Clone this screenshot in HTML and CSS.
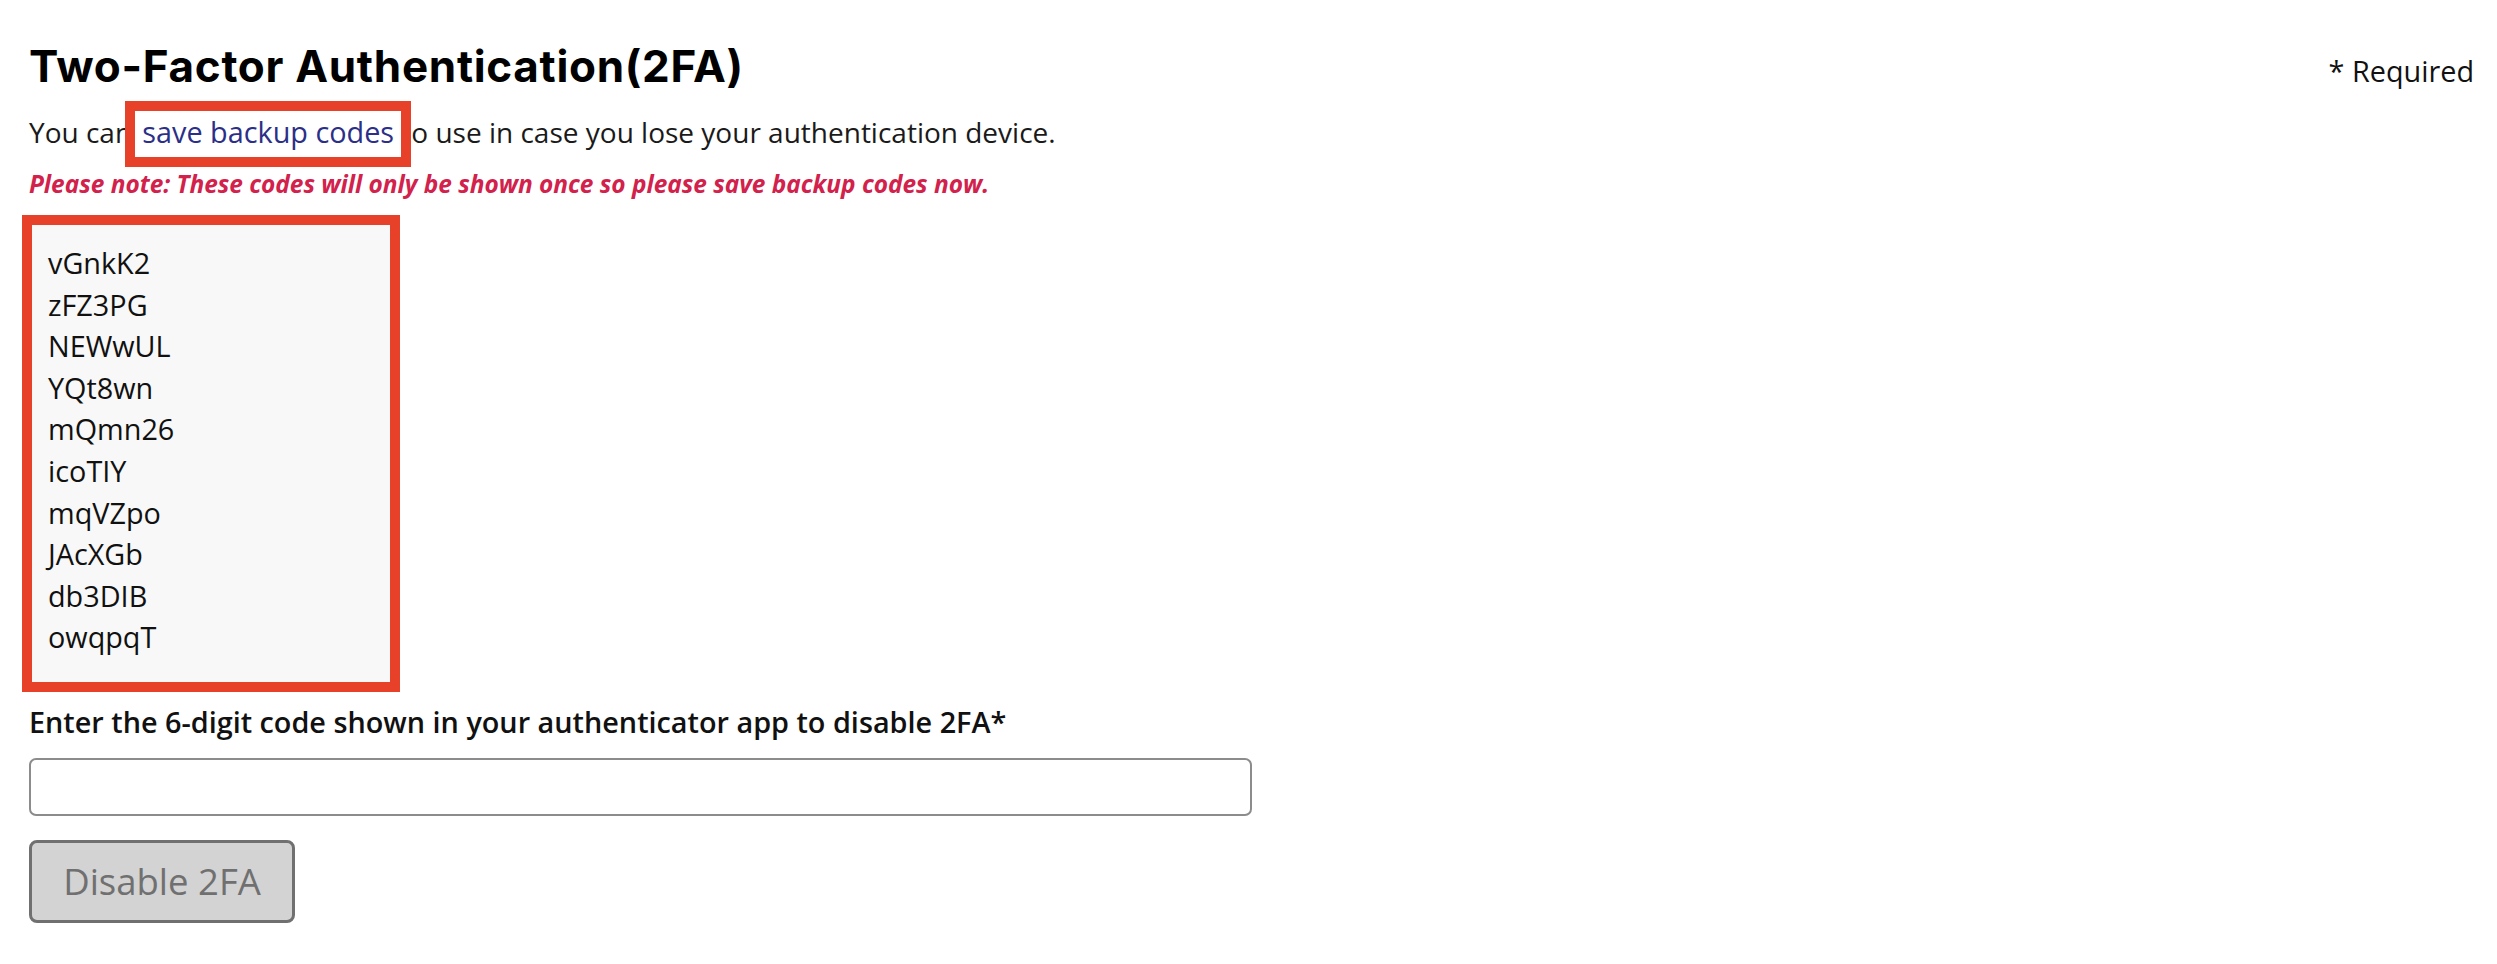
FILE: index.html
```html
<!DOCTYPE html>
<html lang="en">
<head>
<meta charset="utf-8">
<title>Two-Factor Authentication</title>
<link rel="stylesheet" href="styles.css">
</head>
<body>
<div class="page">
  <div class="header">
    <h1 class="title">Two-Factor Authentication(2FA)</h1>
    <span class="required">* Required</span>
  </div>
  <p class="intro">You can <a class="link-hl" href="#">save backup codes</a> to use in case you lose your authentication device.</p>
  <p class="note">Please note: These codes will only be shown once so please save backup codes now.</p>
  <div class="codes">
    <div>vGnkK2</div>
    <div>zFZ3PG</div>
    <div>NEWwUL</div>
    <div>YQt8wn</div>
    <div>mQmn26</div>
    <div>icoTIY</div>
    <div>mqVZpo</div>
    <div>JAcXGb</div>
    <div>db3DIB</div>
    <div>owqpqT</div>
  </div>
  <label class="field-label" for="code">Enter the 6-digit code shown in your authenticator app to disable 2FA*</label>
  <input class="field-input" id="code" type="text">
  <button class="btn" type="button" disabled>Disable 2FA</button>
</div>
</body>
</html>
```

FILE: styles.css
```css
html, body {
  margin: 0;
  padding: 0;
  background: #ffffff;
}

body {
  font-family: "Open Sans", "Noto Sans", sans-serif;
  color: #111111;
}

.page {
  display: flex;
  flex-direction: column;
  align-items: flex-start;
  padding: 41px 23px 0 29px;
}

.header {
  display: flex;
  justify-content: space-between;
  align-items: baseline;
  align-self: stretch;
}

.title {
  margin: 0;
  font-family: "Inter", "Roboto", sans-serif;
  font-weight: 700;
  font-size: 44px;
  line-height: 50px;
  color: #000000;
  letter-spacing: 0.7px;
}

.required {
  font-size: 28.8px;
  line-height: 46px;
  color: #111111;
}

.intro {
  margin: 15px 0 0 0;
  font-size: 28px;
  line-height: 46px;
  color: #1a1a1a;
}

.link-hl {
  position: relative;
  color: #2b2f88;
  font-size: 28.8px;
  text-decoration: none;
  background: #ffffff;
  border: 10px solid #e8412a;
  padding: 1px 7px 6px 7px;
  margin: 0 -17px 0 -14px;
}

.note {
  margin: 11px 0 0 0;
  font-size: 24.4px;
  line-height: 36px;
  font-weight: 700;
  font-style: italic;
  color: #d2214b;
}

.codes {
  box-sizing: border-box;
  width: 378px;
  margin: 13px 0 0 -7px;
  padding: 17px 15px 24px 16px;
  border: 10px solid #e8412a;
  background: #f8f8f8;
  font-size: 28.8px;
  line-height: 41.6px;
  color: #111111;
}

.field-label {
  margin-top: 7px;
  font-size: 28.8px;
  line-height: 46px;
  font-weight: 600;
  color: #111111;
}

.field-input {
  box-sizing: border-box;
  margin-top: 13px;
  width: 1223px;
  height: 58px;
  border: 2px solid #8c8c8c;
  border-radius: 7px;
  background: #ffffff;
  font-family: "Open Sans", sans-serif;
  font-size: 28px;
  padding: 0 14px;
}

.btn {
  box-sizing: border-box;
  margin-top: 24px;
  width: 266px;
  height: 83px;
  border: 3px solid #707070;
  border-radius: 8px;
  background: #d3d3d3;
  color: #707070;
  font-family: "Open Sans", sans-serif;
  font-size: 36.5px;
  padding: 0;
}
```
